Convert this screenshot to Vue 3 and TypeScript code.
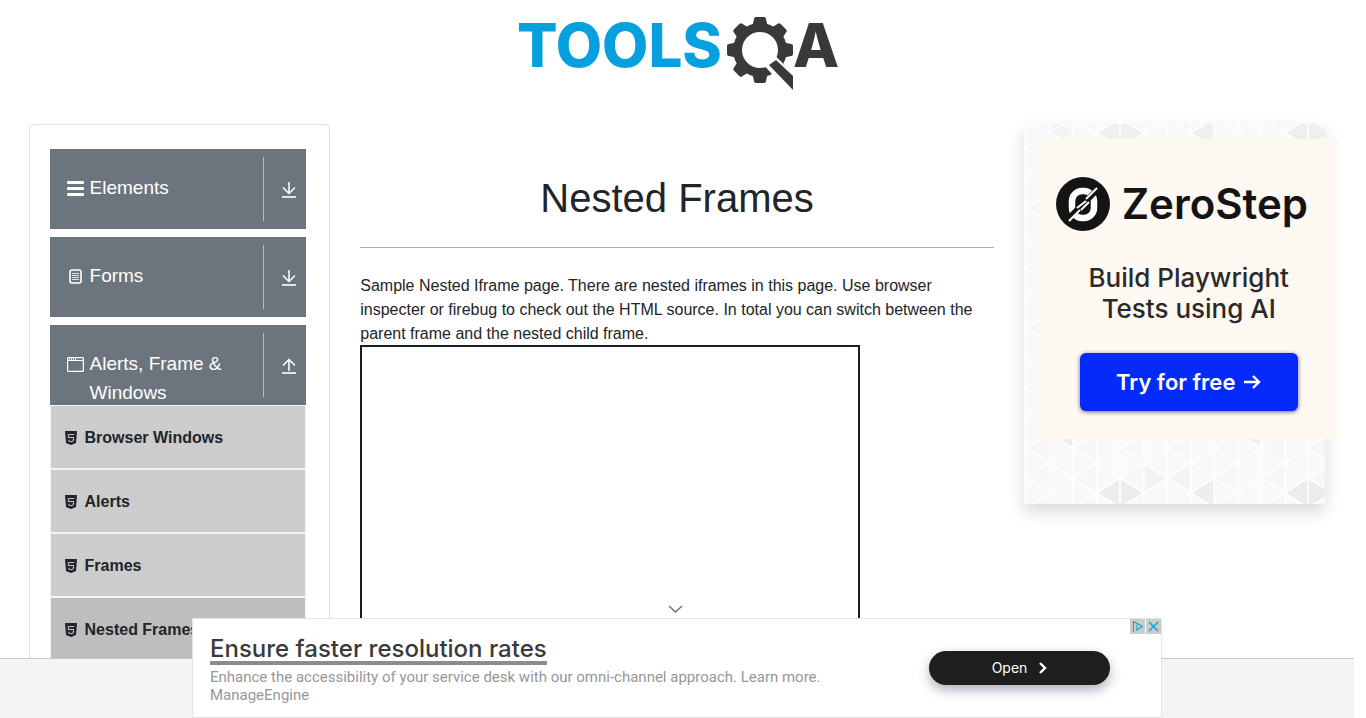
<script setup lang="ts">
interface Group {
  label: string
  icon: 'list' | 'form' | 'window'
  open: boolean
}

interface Tile {
  points: string
  fill: string
}

const groups: Group[] = [
  { label: 'Elements', icon: 'list', open: false },
  { label: 'Forms', icon: 'form', open: false },
  { label: 'Alerts, Frame & Windows', icon: 'window', open: true },
]

const pages: string[] = ['Browser Windows', 'Alerts', 'Frames', 'Nested Frames']
const currentPage = 'Nested Frames'

const teeth: number[] = [0, 45, 90, 135, 180, 225, 270, 315]

const tiles: Tile[] = [
  { points: '73,9 96,-6 119,9 96,24', fill: '#efefef' },
  { points: '167,9 190,-6 190,24', fill: '#efefef' },
  { points: '26,-6 26,24 49,9', fill: '#f4f4f4' },
  { points: '261,9 284,-6 307,9 284,24', fill: '#efefef' },
  { points: '26,309 49,324 49,294', fill: '#eeeeee' },
  { points: '214,309 237,324 237,294', fill: '#eeeeee' },
  { points: '120,339 143,354 120,369', fill: '#f2f2f2' },
  { points: '167,339 143,354 167,369', fill: '#f2f2f2' },
  { points: '73,369 96,354 119,369 96,384', fill: '#ededed' },
  { points: '167,369 190,354 190,384', fill: '#eeeeee' },
  { points: '261,369 284,354 307,369 284,384', fill: '#ececec' },
]
</script>

<template>
  <div class="page">
    <header class="top">
      <a href="#" class="brand" aria-label="TOOLSQA">
        <svg width="324" height="90" viewBox="0 0 324 90">
          <text class="brand-text" x="2" y="62" fill="#06a0df">TOOLS</text>
          <g transform="translate(245 45)">
            <g fill="#393939">
              <path
                v-for="angle in teeth"
                :key="angle"
                d="M-8 -22 L-6 -31 Q-6 -33 -4 -33 L4 -33 Q6 -33 6 -31 L8 -22 Z"
                :transform="`rotate(${angle})`"
              />
              <circle r="27" />
            </g>
            <circle r="18" fill="#fff" />
            <path d="M16 10 L37 31 L37 48 L9 17 Z" fill="#fff" stroke="#fff" stroke-width="5" />
            <path d="M16 10 L33 26 L33 40 L9 15 Z" fill="#393939" />
          </g>
          <text class="brand-text" x="278" y="62" fill="#393939">A</text>
        </svg>
      </a>
    </header>

    <div class="columns">
      <div class="column">
        <nav class="sidebar">
          <section v-for="group in groups" :key="group.label" class="group">
            <button type="button" class="group-head" :aria-expanded="group.open">
              <span class="group-title">
                <svg v-if="group.icon === 'list'" width="17" height="17" viewBox="0 0 17 17" fill="#fff">
                  <rect y="1" width="17" height="3" rx="1" />
                  <rect y="7" width="17" height="3" rx="1" />
                  <rect y="13" width="17" height="3" rx="1" />
                </svg>
                <svg v-else-if="group.icon === 'form'" width="17" height="17" viewBox="0 0 17 17" fill="none" stroke="#fff">
                  <rect x="3" y="2" width="11" height="13" rx="2" stroke-width="1.6" />
                  <path d="M5 5.5h7M5 7.5h7M5 9.5h7M5 11.5h7" stroke-width="1" opacity=".8" />
                </svg>
                <svg v-else width="17" height="17" viewBox="0 0 17 17" fill="none" stroke="#fff">
                  <rect x=".6" y="1.6" width="15.8" height="13.8" rx="1" stroke-width="1.2" />
                  <path d="M1 4.5h15" />
                  <path d="M2.5 1v3M4.5 1v3M6.5 1v3M8.5 1v3" opacity=".8" />
                </svg>
                <span>{{ group.label }}</span>
              </span>
              <span class="group-arrow">
                <svg width="16" height="18" viewBox="0 0 16 18" fill="none" stroke="#fff" stroke-width="1.5">
                  <path v-if="group.open" d="M8 14V3M2 8.500l6-6 6 6" />
                  <path v-else d="M8 1v11M2 6.500l6 6 6-6" />
                  <path d="M1 16h14" stroke-width="1.6" />
                </svg>
              </span>
            </button>
            <ul v-if="group.open" class="pages">
              <li v-for="page in pages" :key="page">
                <a href="#" class="page-link" :class="{ current: page === currentPage }">
                  <svg width="12" height="14" viewBox="0 0 12 14">
                    <path d="M0 0h12l-1 12-5 2-5-2z" fill="#212529" />
                    <path d="M9.200 3.600H3.200l.2 2.900h5.200l-.3 3.500L6 10.800l-2.200-.8-.1-1.200" fill="none" stroke="#ccc" stroke-width="1" />
                  </svg>
                  <span>{{ page }}</span>
                </a>
              </li>
            </ul>
          </section>
        </nav>
      </div>

      <main class="column content">
        <h1>Nested Frames</h1>
        <hr>
        <p>
          Sample Nested Iframe page. There are nested iframes in this page. Use browser
          inspecter or firebug to check out the HTML source. In total you can switch between
          the parent frame and the nested child frame.
        </p>
        <div class="frame"></div>
      </main>

      <aside class="column">
        <div class="promo">
          <svg class="promo-pattern" width="100%" height="380" aria-hidden="true">
            <defs>
              <pattern id="mesh" x="2" y="9" width="47" height="30" patternUnits="userSpaceOnUse">
                <path d="M0 15L24 0V30Z" fill="#f5f5f5" opacity=".5" />
                <path d="M0 0V30M24 0V30M0 15L24 0L47 15L24 30ZM47 0V30" fill="none" stroke="#fff" stroke-width="1.500" />
              </pattern>
            </defs>
            <rect width="100%" height="380" fill="#f9f9f9" />
            <polygon v-for="tile in tiles" :key="tile.points" :points="tile.points" :fill="tile.fill" />
            <rect width="100%" height="380" fill="url(#mesh)" />
          </svg>
          <a href="#" class="zero">
            <span class="zero-brand">
              <svg width="54" height="54" viewBox="0 0 54 54" fill="none">
                <circle cx="27" cy="27" r="27" fill="#141414" />
                <rect x="16" y="14" width="22" height="27" rx="10" stroke="#fff" stroke-width="6.500" />
                <path d="M10 44L43 11" stroke="#141414" stroke-width="6" />
                <path d="M13 44L24 33M21 31L30 24M25 33L33 25M30 22L41 11" stroke="#fff" stroke-width="2" />
              </svg>
              <span>ZeroStep</span>
            </span>
            <span class="zero-text">Build Playwright<br>Tests using AI</span>
            <span class="zero-button">
              Try for free
              <svg width="18" height="18" viewBox="0 0 18 18" fill="none" stroke="#fff" stroke-width="2.400">
                <path d="M1 9h15M10 3l6 6-6 6" />
              </svg>
            </span>
          </a>
        </div>
      </aside>
    </div>

    <footer class="bottom">
      <div class="banner">
        <button type="button" class="collapse" aria-label="Collapse">
          <svg width="15" height="8" viewBox="0 0 15 8" fill="none" stroke="#757575" stroke-width="1.500">
            <path d="M1 1l6.500 6L14 1" />
          </svg>
        </button>
        <div class="banner-copy">
          <a href="#" class="banner-title">Ensure faster resolution rates</a>
          <a href="#" class="banner-text">Enhance the accessibility of your service desk with our omni-channel approach. Learn more.<br>ManageEngine</a>
        </div>
        <button type="button" class="open">
          Open
          <svg width="8" height="12" viewBox="0 0 8 12" fill="none" stroke="#fff" stroke-width="2.400">
            <path d="M1 1l5 5-5 5" />
          </svg>
        </button>
        <div class="choices">
          <button type="button" aria-label="Ad choices">
            <svg width="15" height="15" viewBox="0 0 15 15" fill="none" stroke="#00aecd" stroke-width="1.200">
              <path d="M3.500 12.500V2.500L12.500 7.500L6 11.500" stroke-linejoin="round" />
              <path d="M7 6.500v4M7 4.500v1" />
            </svg>
          </button>
          <button type="button" aria-label="Close ad">
            <svg width="15" height="15" viewBox="0 0 15 15" fill="none" stroke="#00aecd" stroke-width="1.500">
              <path d="M3 3l9 9M12 3l-9 9" />
            </svg>
          </button>
        </div>
      </div>
    </footer>
  </div>
</template>

<style>
html,
body {
  margin: 0;
  overflow: hidden;
  background: #fff;
}
</style>

<style scoped>
* {
  box-sizing: border-box;
}

svg {
  display: block;
  flex: none;
}

a {
  color: inherit;
  text-decoration: none;
}

button {
  margin: 0;
  padding: 0;
  border: 0;
  background: none;
  color: inherit;
  font: inherit;
  cursor: pointer;
}

.page {
  height: 100vh;
  padding-right: 12px;
  overflow: hidden;
  color: #212529;
  font: 16px/24px "Liberation Sans", Arial, sans-serif;
}

.top {
  display: flex;
  justify-content: center;
  padding: 5px 0;
  margin-bottom: 24px;
}

.brand-text {
  font: 800 60px Inter, sans-serif;
}

.columns {
  display: grid;
  grid-template-columns: 1fr 2fr 1fr;
  width: 98%;
  margin: 0 auto;
}

.column {
  min-width: 0;
  padding: 0 15px;
}

.sidebar {
  display: flex;
  flex-direction: column;
  gap: 8px;
  padding: 24px 23px 24px 20px;
  border: 1px solid #dfdfdf;
  border-radius: 5px;
}

.group-head {
  display: flex;
  align-items: flex-start;
  width: 100%;
  height: 80px;
  overflow: hidden;
  background: #6c757d;
  color: #fff;
  font-size: 19px;
  line-height: 29px;
  text-align: left;
}

.group-title {
  display: flex;
  flex: 1;
  gap: 6px;
  padding: 24px 17px 0;
}

.group-title svg {
  margin-top: 7px;
}

.group-arrow {
  display: flex;
  align-items: center;
  justify-content: center;
  width: 43px;
  height: 64px;
  margin-top: 8px;
  padding: 2px 0 0 7px;
  border-left: 1px solid #b5babe;
}

.pages {
  margin: 0;
  padding: 0;
  list-style: none;
}

.page-link {
  display: flex;
  align-items: center;
  gap: 8px;
  height: 64px;
  padding: 1px 14px 0;
  border: 1px solid #f4f4f4;
  background: #ccc;
  font-weight: 700;
}

.page-link.current {
  background: #bebebe;
}

.content h1 {
  margin: 50px 0 25px;
  font-size: 40px;
  font-weight: 400;
  line-height: 48px;
  text-align: center;
}

.content hr {
  height: 1px;
  margin: 0 0 26px;
  border: 0;
  background: #a9abac;
}

.content p {
  margin: 0;
}

.frame {
  width: 500px;
  height: 350px;
  margin-top: -1px;
  border: 2px solid #1a1d21;
}

.promo {
  position: relative;
  padding: 15px;
  height: 380px;
  box-shadow: 0 8px 16px rgba(0, 0, 0, 0.15);
}

.promo-pattern {
  position: absolute;
  inset: 0;
}

.zero {
  position: relative;
  display: flex;
  flex-direction: column;
  align-items: center;
  width: 300px;
  height: 300px;
  padding-top: 38px;
  background: #fdf8f2;
  font-family: Inter, sans-serif;
}

.zero-brand {
  display: flex;
  align-items: center;
  align-self: flex-start;
  gap: 12px;
  padding-left: 17px;
  color: #141414;
  font-size: 42px;
  font-weight: 600;
  line-height: 54px;
}

.zero-text {
  margin-top: 31px;
  color: #2b2a29;
  font-size: 26px;
  font-weight: 500;
  line-height: 31px;
  text-align: center;
}

.zero-button {
  display: flex;
  align-items: center;
  justify-content: center;
  gap: 8px;
  width: 218px;
  height: 58px;
  margin-top: 29px;
  border-radius: 6px;
  background: #052bfc;
  box-shadow: 0 1px 4px rgba(0, 0, 80, 0.6);
  color: #fff;
  font-size: 22px;
  font-weight: 600;
}

.bottom {
  position: fixed;
  right: 12px;
  bottom: 0;
  left: 0;
  display: flex;
  align-items: flex-end;
  justify-content: center;
  height: 60px;
  border-top: 1px solid #c8c8c8;
  background: #f4f4f4;
}

.banner {
  position: relative;
  display: flex;
  flex: none;
  align-items: center;
  width: 970px;
  height: 100px;
  padding: 0 51px 0 17px;
  border: 1px solid #e4e4e4;
  background: #fff;
}

.collapse {
  position: absolute;
  bottom: 100%;
  left: 50%;
  padding: 6px;
  transform: translateX(-15px);
}

.banner-copy {
  display: flex;
  flex: 1;
  flex-direction: column;
  align-items: flex-start;
}

.banner-title {
  padding-top: 4px;
  border-bottom: 4px solid #8e8c8b;
  color: #3a3a3a;
  font: 500 24px/24px Inter, sans-serif;
}

.banner-text {
  margin-top: 3px;
  color: #979797;
  font: 15px/18px Roboto, sans-serif;
}

.open {
  display: flex;
  align-items: center;
  justify-content: center;
  gap: 12px;
  width: 181px;
  height: 34px;
  border-radius: 17px;
  background: #1e1e1c;
  box-shadow: 0 5px 12px rgba(30, 20, 60, 0.35);
  color: #fff;
  font: 14px/18px Inter, sans-serif;
}

.choices {
  position: absolute;
  top: 0;
  right: 0;
  display: flex;
  gap: 1px;
}

.choices button {
  background: #ccc;
}
</style>
